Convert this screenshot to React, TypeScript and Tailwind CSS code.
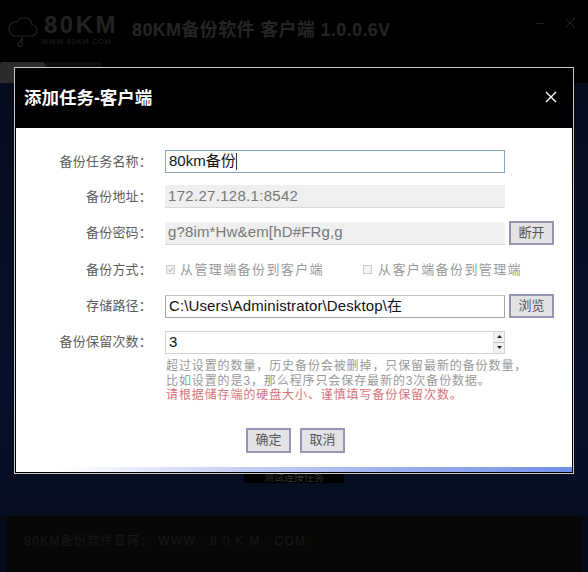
const cn = "font-['Liberation_Sans','Noto_Sans_CJK_SC',sans-serif]";

function Row({ label, children, className }: { label: string; children: React.ReactNode; className?: string }) {
  return (
    <div className={`flex items-center ${className ?? ""}`}>
      <div className="mr-[13px] w-[136px] shrink-0 text-right text-[13px] text-[#5c5c5c] tracking-[0.2px]">{label}</div>
      {children}
    </div>
  );
}

function Btn({ text, className }: { text: string; className?: string }) {
  return (
    <div className={`flex w-[45px] items-center justify-center border-2 border-[#9397b0] bg-[#e3e3e6] text-[13px] text-[#555] ${className ?? "h-[24px]"}`}>
      {text}
    </div>
  );
}

function Logo() {
  return (
    <div className="flex items-center">
      <svg width="31" height="34" viewBox="0 0 31 34" fill="none" stroke="#222" strokeWidth="1.2">
        <path d="M8 23h16a5.5 5.5 0 0 0 1-11 8 8 0 0 0-15-3 7 7 0 0 0-2 14z" />
        <path d="M15 25l-3 5a2 2 0 1 0 3 1z" />
      </svg>
      <div className="ml-[3px] flex flex-col items-start">
        <div className="pl-[3px] text-[24px] leading-[22px] font-bold tracking-[2.5px] text-[#222]">80KM</div>
        <div className="mt-[2px] text-[7.5px] leading-[8px] text-[#222] tracking-[0.7px]">WWW.80KM.COM</div>
      </div>
    </div>
  );
}

export default function App() {
  return (
    <div className={`relative flex h-[572px] w-[588px] flex-col overflow-hidden bg-[#050b19] ${cn}`}>
      {/* window behind the dialog */}
      <div className="h-[62px] bg-black px-[7px] pt-[13px]">
        <div className="flex items-center">
          <Logo />
          <div className="ml-[14px] text-[18px] font-bold tracking-[0.35px] text-[#242424]">80KM备份软件 客户端 1.0.0.6V</div>
          <div className="ml-auto mb-[14px] mr-[5px] flex items-center gap-[20px] text-[#242424]">
            <div className="h-px w-[8px] bg-[#242424]" />
            <svg width="12" height="12" viewBox="0 0 12 12" stroke="currentColor"><path d="M1 1l10 10M11 1L1 11" /></svg>
          </div>
        </div>
      </div>
      <div className="flex h-[21px] bg-black">
        <div className="h-full w-[45px] rounded-t-[2px] bg-[#2b2b2b]" />
        <div className="h-full w-[57px] rounded-t-[2px] bg-[#0e0e0e]" />
      </div>
      <div className="h-[433px] bg-[linear-gradient(180deg,#060c1c,#08112a_70%,#060d20)]" />
      <div className="mx-[6px] flex flex-1 items-center bg-[#070706] pb-[6px] pl-[18px]">
        <div className="text-[12px] tracking-[1.3px] text-[#191919]">80KM备份软件官网： WWW . 8 0 K M . COM</div>
      </div>

      {/* strip peeking out under the dialog */}
      <div className="absolute left-[244px] top-[472px] flex h-[11px] w-[100px] items-center justify-center bg-black text-[10px] text-[#333]">
        测试连接任务
      </div>

      {/* dialog */}
      <div className="absolute left-[14px] top-[67px] flex h-[407px] w-[560px] flex-col border border-[#c8c8c8] bg-black">
        <div className="flex h-[60px] items-center justify-between pl-[9px] pr-[14px]">
          <div className="pt-[1px] text-[17.5px] font-bold text-white">添加任务-客户端</div>
          <svg width="14" height="14" viewBox="0 0 14 14" stroke="#fff" strokeWidth="1.4" className="mb-[2px] mr-[1px]">
            <path d="M2 2l10 10M12 2L2 12" />
          </svg>
        </div>
        <div className="relative mx-px mb-px flex flex-1 flex-col bg-white pr-[6px] pt-[22px]">
          <Row label="备份任务名称：" className="h-[23px]">
            <div className="flex h-[23px] w-[340px] items-center border border-[#7fa8c4] pl-[3px] text-[15px] text-[#111]">
              80km备份<span className="h-[17px] w-px bg-[#333]" />
            </div>
          </Row>
          <Row label="备份地址：" className="mt-[12px] h-[23px]">
            <div className="flex h-[23px] w-[340px] items-center border-b border-[#d8d8d8] bg-[#efefef] pl-[3px] text-[15px] tracking-[0.3px] text-[#777]">
              172.27.128.1:8542
            </div>
          </Row>
          <Row label="备份密码：" className="mt-[13px] h-[24px]">
            <div className="flex h-[23px] w-[340px] items-center border-b border-[#d8d8d8] bg-[#efefef] pl-[3px] text-[15px] tracking-[0.15px] text-[#777]">
              g?8im*Hw&amp;em[hD#FRg,g
            </div>
            <Btn text="断开" className="ml-[4px] h-[24px]" />
          </Row>
          <Row label="备份方式：" className="mt-[13px] h-[23px]">
            <div className="flex w-[198px] items-center text-[13px] tracking-[1.4px] text-[#999]">
              <span className="ml-[1px] mr-[5px] flex h-[9px] w-[9px] items-center justify-center border border-[#ccc] bg-[#f2f2f2]">
                <svg width="7" height="7" viewBox="0 0 7 7" fill="none" stroke="#aaa"><path d="M1 3.5l2 2 3-4" /></svg>
              </span>
              从管理端备份到客户端
            </div>
            <div className="flex items-center text-[13px] tracking-[1.4px] text-[#999]">
              <span className="mr-[6px] h-[9px] w-[9px] border border-[#ccc] bg-[#f4f4f4]" />
              从客户端备份到管理端
            </div>
          </Row>
          <Row label="存储路径：" className="mt-[13px] h-[24px]">
            <div className="flex h-[23px] w-[340px] items-center border border-[#a6a6a6] border-t-[#c4c4c4] pl-[3px] text-[15px] tracking-[0.12px] text-[#111]">
              C:\Users\Administrator\Desktop\在
            </div>
            <Btn text="浏览" className="ml-[4px] h-[24px]" />
          </Row>
          <Row label="备份保留次数：" className="mt-[12px] h-[24px]">
            <div className="flex h-[23px] w-[340px] items-center justify-between border border-[#d4d4d4] pl-[3px] text-[15px] text-[#111]">
              3
              <div className="flex h-full w-[11px] flex-col border-l border-[#e0e0e0] bg-[#f0f0f0]">
                <div className="flex flex-1 items-center justify-center border-b border-[#bbb] text-[#222]">
                  <svg width="5" height="3" viewBox="0 0 5 3" fill="currentColor"><path d="M2.5 0L5 3H0z" /></svg>
                </div>
                <div className="flex flex-1 items-center justify-center text-[#222]">
                  <svg width="5" height="3" viewBox="0 0 5 3" fill="currentColor"><path d="M0 0h5L2.5 3z" /></svg>
                </div>
              </div>
            </div>
          </Row>
          <div className="ml-[150px] mt-[5px] text-[12px] leading-[14.5px] tracking-[0.9px] text-[#999]">
            <div>超过设置的数量，历史备份会被删掉，只保留最新的备份数量，</div>
            <div>比如设置的是3，那么程序只会保存最新的3次备份数据。</div>
            <div className="text-[#d87378]">请根据储存端的硬盘大小、谨慎填写备份保留次数。</div>
          </div>
          <div className="ml-[230px] mt-[25px] flex gap-[9px]">
            <Btn text="确定" className="h-[25px]" />
            <Btn text="取消" className="h-[25px]" />
          </div>
          <div className="absolute bottom-0 left-0 right-0 h-[5px] bg-[linear-gradient(90deg,#ffffff_8%,#c5cff5_40%,#6f8fe8_100%)]" />
        </div>
      </div>
    </div>
  );
}
